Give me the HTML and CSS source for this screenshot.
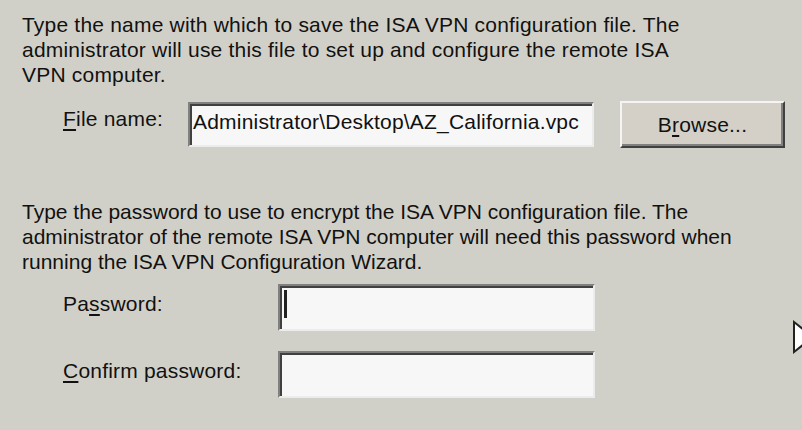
FILE: index.html
```html
<!DOCTYPE html>
<html lang="en">
<head>
  <meta charset="UTF-8">
  <title>ISA VPN Configuration</title>
  <link rel="stylesheet" href="styles.css">
</head>
<body>
  <div class="page">
    <p class="intro">Type the name with which to save the ISA VPN configuration file. The<br>administrator will use this file to set up and configure the remote ISA<br>VPN computer.</p>
    <div class="row file-row">
      <label class="label file-label"><u>F</u>ile name:</label>
      <div class="field file-field"><span class="value">Administrator\Desktop\AZ_California.vpc</span></div>
      <button class="btn">B<u>r</u>owse...</button>
    </div>

    <p class="intro second">Type the password to use to encrypt the ISA VPN configuration file. The<br>administrator of the remote ISA VPN computer will need this password when<br>running the ISA VPN Configuration Wizard.</p>
    <div class="row pw-row">
      <label class="label pw-label">Pa<u>s</u>sword:</label>
      <div class="field pw-field"><span class="caret"></span></div>
    </div>
    <div class="row pw-row confirm">
      <label class="label pw-label"><u>C</u>onfirm password:</label>
      <div class="field pw-field"></div>
    </div>
  </div>
  <div class="arrow"></div>
</body>
</html>
```

FILE: styles.css
```css
body {
  margin: 0;
  background: #d1d0c8;
  font-family: "Liberation Sans", Arial, sans-serif;
  font-size: 21px;
  letter-spacing: 0.2px;
  color: #111;
  width: 802px;
  height: 430px;
  overflow: hidden;
  position: relative;
}

.page {
  padding: 12px 0 0 22px;
}

.intro {
  margin: 0;
  line-height: 25px;
  white-space: nowrap;
}

.intro.second {
  margin-top: 51px;
  letter-spacing: 0;
}

.row {
  display: flex;
  align-items: center;
}

.file-row {
  margin-top: 14px;
}

.label {
  padding-left: 41px;
}

.label u {
  text-decoration-thickness: 2px;
  text-underline-offset: 3px;
}

.file-label {
  width: 125px;
  padding-bottom: 12px;
}

.field {
  background: #f7f7f7;
  border-top: 2px solid #808080;
  border-left: 2px solid #808080;
  border-bottom: 2px solid #ececec;
  border-right: 2px solid #ececec;
  box-shadow: inset 2px 2px 0 #404040;
  box-sizing: border-box;
}

.file-field {
  width: 406px;
  height: 45px;
  padding: 6px 0 0 3px;
  white-space: nowrap;
  overflow: hidden;
}

.btn {
  margin-left: 26px;
  width: 165px;
  height: 47px;
  background: #d4d0c8;
  font: inherit;
  letter-spacing: inherit;
  color: #111;
  border-top: 2px solid #f4f4f4;
  border-left: 2px solid #f4f4f4;
  border-bottom: 2px solid #404040;
  border-right: 2px solid #404040;
  box-shadow: inset -2px -2px 0 #808080;
  padding: 1px 0 0;
}

.btn u {
  text-decoration-thickness: 2px;
  text-underline-offset: 3px;
}

.pw-row {
  margin-top: 10px;
}

.pw-row.confirm {
  margin-top: 20px;
}

.pw-label {
  width: 215px;
  padding-bottom: 8px;
}

.pw-field {
  width: 317px;
  height: 47px;
  padding: 4px 0 0 4px;
}

.caret {
  display: block;
  width: 3px;
  height: 28px;
  background: #222;
}

.arrow {
  position: absolute;
  left: 793px;
  top: 320px;
  width: 0;
  height: 0;
  border-top: 17px solid transparent;
  border-bottom: 17px solid transparent;
  border-left: 22px solid #222;
}

.arrow::after {
  content: "";
  position: absolute;
  left: -20px;
  top: -13px;
  border-top: 13px solid transparent;
  border-bottom: 13px solid transparent;
  border-left: 16px solid #fff;
}
```
